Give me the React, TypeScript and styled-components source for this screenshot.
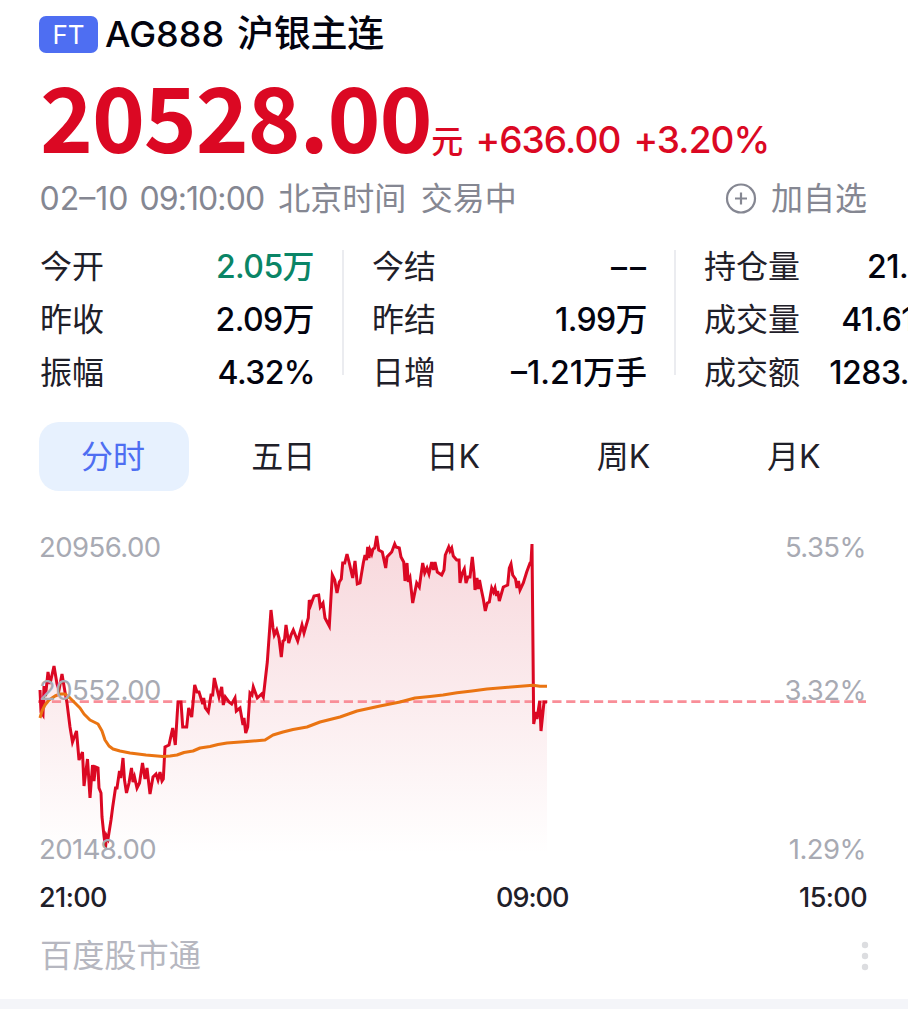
import React from 'react';
import styled, { createGlobalStyle } from 'styled-components';

const Global = createGlobalStyle`
  * { box-sizing: border-box; }
  html, body { margin: 0; background: #fff; overflow: hidden; }
  body { font-family: Inter, "Noto Sans CJK SC", sans-serif; color: #1f2029; }
`;

const Page = styled.main`
  width: 908px;
  height: 1024px;
  overflow: hidden;
  display: flex;
  flex-direction: column;
  background: #fff;
`;

const Header = styled.header`
  padding: 9px 41px 0 39px;
  display: flex;
  flex-direction: column;
`;

const TitleRow = styled.div`
  display: flex;
  align-items: center;
  height: 50px;
`;

const MarketTag = styled.span`
  width: 59px;
  height: 37px;
  border-radius: 7px;
  background: #4e6ef2;
  color: #fff;
  font-size: 26px;
  line-height: 37px;
  text-align: center;
`;

const Text = styled.span<{ $size: number; $weight?: number; $track?: number; $ml?: number }>`
  font-size: ${p => p.$size}px;
  font-weight: ${p => p.$weight ?? 400};
  letter-spacing: ${p => p.$track ?? 0}px;
  margin-left: ${p => p.$ml ?? 0}px;
  white-space: nowrap;
`;

const TitleText = styled(Text)`
  color: #03040f;
  line-height: 50px;
`;

const PriceRow = styled.div`
  display: flex;
  align-items: baseline;
  height: 114px;
  line-height: 111px;
  color: #db0823;
`;

const Price = styled.strong`
  font-family: "Noto Sans CJK SC", sans-serif;
  font-weight: 700;
  font-size: 90px;
  letter-spacing: -1.2px;
  margin-left: 1px;
`;

const MetaRow = styled.div`
  display: flex;
  align-items: center;
  height: 52px;
  line-height: 52px;
  color: #858792;
`;

const Watch = styled.div`
  margin-left: auto;
  display: flex;
  align-items: center;
  gap: 14px;
`;

const Stats = styled.section`
  display: flex;
  margin-top: 15px;
  padding-left: 40px;
  height: 159px;
`;

const StatColumn = styled.div<{ $width: number }>`
  width: ${p => p.$width}px;
  flex: none;
`;

const Divider = styled.i`
  flex: none;
  width: 2px;
  height: 125px;
  margin: 10px 28px 0;
  background: #ebecf0;
`;

const StatRow = styled.div`
  display: flex;
  justify-content: space-between;
  align-items: center;
  height: 53px;
  line-height: 53px;
  font-size: 32px;
  white-space: nowrap;
`;

const StatValue = styled.span<{ $up?: boolean; $track?: number; $bleed?: number }>`
  font-weight: 500;
  color: ${p => (p.$up ? '#0a8566' : '#03040f')};
  letter-spacing: ${p => p.$track ?? -0.6}px;
  margin-right: ${p => -(p.$bleed ?? 0)}px;
`;

const Tabs = styled.nav`
  display: flex;
  gap: 20.2px;
  margin-top: 23px;
  padding-left: 39px;
`;

const Tab = styled.button<{ $active?: boolean }>`
  width: 150px;
  height: 69px;
  padding: 0 2px 0 0;
  border: 0;
  border-radius: 20px;
  background: ${p => (p.$active ? '#e7f1fe' : 'transparent')};
  color: ${p => (p.$active ? '#4e6ef2' : '#1f2029')};
  font: 400 32px/69px Inter, "Noto Sans CJK SC", sans-serif;
`;

const Chart = styled.svg`
  display: block;
  flex: none;
  margin-top: 29px;
`;

const AxisText = styled.text`
  font-family: Inter, sans-serif;
  font-size: 27.5px;
  letter-spacing: -0.55px;
  fill: #a8aab3;
`;

const Times = styled.div`
  display: grid;
  grid-template-columns: 457px 1fr auto;
  height: 54px;
  padding: 0 41px 0 39px;
  line-height: 56px;
  font-size: 27px;
  font-weight: 500;
  letter-spacing: -0.6px;
`;

const Footer = styled.footer`
  display: flex;
  justify-content: space-between;
  align-items: center;
  height: 64px;
  padding: 0 39px 0 40px;
  font-size: 32.2px;
  line-height: 64px;
  color: #b6b7c0;
`;

const Strip = styled.div`
  height: 10px;
  margin-top: 11px;
  background: #f4f5f9;
`;

const line: number[] = [
  40,690, 41,712, 43,715, 44,686, 45.5,696, 48,672, 50,684, 54,666, 57,684, 59,690, 62,674, 65,692, 67,703, 70,727, 72.5,742,
  76.5,731, 79,760, 82.5,752, 84,786, 87.5,759, 90,798, 92.5,765, 94,781, 95.5,767, 98,768, 99,788, 101,793, 102,817, 104,836,
  105.5,848, 106.5,836, 108,839, 111,820, 112.7,807, 115.5,788, 117,788, 119.5,771, 120.8,778, 123,758, 124.5,780, 126.5,793,
  129,783, 131.5,768, 133,782, 134.5,777, 137,788, 139.5,783, 142.5,763, 145,779, 147,768, 150,794, 153,777, 156,774,
  158,780, 160,772, 162,781, 163.3,779, 165,747, 169,745, 172.7,728, 175.3,745, 178,702, 181,702, 182.7,727, 186.7,727,
  188.7,708, 191.7,717, 194.7,685, 197,692, 199,692, 202.7,704, 203.7,698, 205.3,708, 208.3,712, 211,695, 212.7,695, 214.3,678,
  216.7,688, 219,697, 221.7,687, 223.3,705, 225.3,697, 229,702, 231.7,704, 235,698, 236.3,711, 240,708, 243,725, 244,718,
  245.7,733, 247.7,727, 250,693, 252,695, 253.3,687, 257.3,698, 261.7,694, 263.3,697, 267.3,662, 271,610, 273,628, 274.3,635,
  276.7,630, 279,638, 281.3,657, 283,641, 284.5,640, 286,625, 288.7,643, 291,635, 293.3,630, 297.7,641, 302,625, 304,633,
  308.3,618, 309.3,600, 310.7,605, 314,596, 318.7,595, 320.3,607, 323,603, 325,618, 329.3,626, 332.3,575, 334.7,580, 337,593,
  339.3,582, 341.3,579, 342.7,563, 344.7,563, 347,554, 349.3,563, 352.7,578, 355,561, 357.3,584, 360,583, 363.3,563, 365,555,
  366.5,560, 367.7,547, 369,558, 370,550, 371.7,554, 373,549, 374.7,548, 376.7,536, 378.7,550, 382.3,552, 385.7,568, 387,557,
  391.7,552, 394.7,544, 396,547, 399.3,548, 401,557, 403.7,562, 405,581, 407,563, 408.3,582, 410,578, 412.7,603, 416.7,583,
  419.3,587, 422.7,563, 424.7,573, 427,568, 429,574, 431.7,562, 433.5,570, 435,562, 437.3,572, 441.7,575, 444,570, 445.3,555,
  448.7,547, 450,551, 451.7,548, 453.3,556, 456.7,560, 459,560, 460,583, 462.3,573, 464.3,569, 466,583, 468,577, 470,577,
  472.3,557, 474,573, 475,590, 477,578, 478,589, 479.5,580, 481,588, 483.3,599, 485.3,611, 487.3,603, 489.3,602, 491.7,588,
  493.5,592, 495,588, 496.5,596, 497.7,591, 499.3,601, 503.3,587, 507.7,585, 509.3,568, 511,564, 512.7,575, 515.5,579,
  517,588, 518.5,581, 520,590, 523.3,583, 526.7,572, 530,563, 531,562, 532,544, 533.7,724, 536,712, 537,719, 539.7,701,
  541,731, 544,702, 547,702,
];

const average: number[] = [
  40,718, 42,711, 45,705, 49,700, 55,696, 60,694, 65,694, 70,698, 75,703, 80,708, 84,714, 90,720, 98,724, 102,731,
  105,740, 109,746, 113,749, 120,751, 130,753, 146,755, 163,756.5, 170,756, 177,755, 184,752.5, 193,751, 200,748,
  210,746.5, 218,744.5, 227,743, 247,741.5, 265,740, 273,735, 283,732, 293,729.5, 307,727, 320,722, 340,717,
  357,711, 380,706, 400,702, 415,698, 430,696.5, 443,695, 457,692.8, 472,691, 487,689, 508,687.3, 533,685.3, 540,686.3, 547,686.3,
];

const toPoints = (v: number[]) => {
  const out: string[] = [];
  for (let i = 0; i < v.length; i += 2) out.push(`${v[i]},${v[i + 1]}`);
  return out.join(' ');
};

type Stat = { label: string; value: string; up?: boolean; track?: number; bleed?: number };

const columns: { width: number; rows: Stat[] }[] = [
  { width: 274, rows: [
    { label: '今开', value: '2.05万', up: true },
    { label: '昨收', value: '2.09万' },
    { label: '振幅', value: '4.32%', bleed: 1 },
  ] },
  { width: 274, rows: [
    { label: '今结', value: '––', track: 3, bleed: 3 },
    { label: '昨结', value: '1.99万', bleed: 1 },
    { label: '日增', value: '–1.21万手', track: 0, bleed: 1 },
  ] },
  { width: 204, rows: [
    { label: '持仓量', value: '21.' },
    { label: '成交量', value: '41.61', bleed: 6 },
    { label: '成交额', value: '1283.', track: -0.5, bleed: 1 },
  ] },
];

const tabs = ['分时', '五日', '日K', '周K', '月K'];

export default function App() {
  return (
    <Page>
      <Global />
      <Header>
        <TitleRow>
          <MarketTag>FT</MarketTag>
          <TitleText $size={36} $weight={500} $ml={7}>AG888</TitleText>
          <TitleText $size={37} $weight={500} $ml={13} $track={-0.3}>沪银主连</TitleText>
        </TitleRow>
        <PriceRow>
          <Price>20528.00</Price>
          <Text $size={32} $weight={500}>元</Text>
          <Text $size={37} $weight={500} $ml={12} $track={-0.9}>+636.00</Text>
          <Text $size={37} $weight={500} $ml={13} $track={-0.9}>+3.20%</Text>
        </PriceRow>
        <MetaRow>
          <Text $size={32} $ml={0.5}>02–10</Text>
          <Text $size={32} $ml={11} $track={-0.9}>09:10:00</Text>
          <Text $size={32} $ml={14}>北京时间</Text>
          <Text $size={32} $ml={14.5}>交易中</Text>
          <Watch>
            <svg width="32" height="32" viewBox="0 0 32 32" fill="none" stroke="#858792" strokeWidth="2.2">
              <circle cx="16" cy="15.5" r="14" />
              <path d="M16 9.5v12M10 15.5h12" />
            </svg>
            <Text $size={32}>加自选</Text>
          </Watch>
        </MetaRow>
      </Header>

      <Stats>
        {columns.map((c, i) => (
          <React.Fragment key={i}>
            {i > 0 && <Divider />}
            <StatColumn $width={c.width}>
              {c.rows.map(r => (
                <StatRow key={r.label}>
                  <span>{r.label}</span>
                  <StatValue $up={r.up} $track={r.track} $bleed={r.bleed}>{r.value}</StatValue>
                </StatRow>
              ))}
            </StatColumn>
          </React.Fragment>
        ))}
      </Stats>

      <Tabs>
        {tabs.map((t, i) => <Tab key={t} $active={i === 0}>{t}</Tab>)}
      </Tabs>

      <Chart width="908" height="350" viewBox="0 520 908 350" fill="none">
        <defs>
          <linearGradient id="area" gradientUnits="userSpaceOnUse" x1="0" y1="536" x2="0" y2="855">
            <stop offset="0" stopColor="#d00823" stopOpacity="0.16" />
            <stop offset="1" stopColor="#d00823" stopOpacity="0" />
          </linearGradient>
        </defs>
        <polygon points={`40,855 ${toPoints(line)} 547,855`} fill="url(#area)" />
        <path d="M38 701.7H866" stroke="#f98e98" strokeWidth="2.8" strokeDasharray="9.2 4.7" />
        <polyline points={toPoints(line)} stroke="#db0823" strokeWidth="3" />
        <polyline points={toPoints(average)} stroke="#ea7412" strokeWidth="3" strokeLinejoin="round" />
        <AxisText x="39" y="556.5">20956.00</AxisText>
        <AxisText x="39" y="700">20552.00</AxisText>
        <AxisText x="39" y="858.5">20148.00</AxisText>
        <AxisText x="866" y="556.5" textAnchor="end">5.35%</AxisText>
        <AxisText x="866" y="700" textAnchor="end">3.32%</AxisText>
        <AxisText x="866" y="858.5" textAnchor="end">1.29%</AxisText>
      </Chart>

      <Times>
        <span>21:00</span>
        <Text $size={27} $weight={500} $track={-1}>09:00</Text>
        <span>15:00</span>
      </Times>

      <Footer>
        <span>百度股市通</span>
        <svg width="8" height="30" viewBox="0 0 8 30" fill="#dcdde0">
          <circle cx="4" cy="4" r="3.2" />
          <circle cx="4" cy="15" r="3.2" />
          <circle cx="4" cy="26" r="3.2" />
        </svg>
      </Footer>
      <Strip />
    </Page>
  );
}
